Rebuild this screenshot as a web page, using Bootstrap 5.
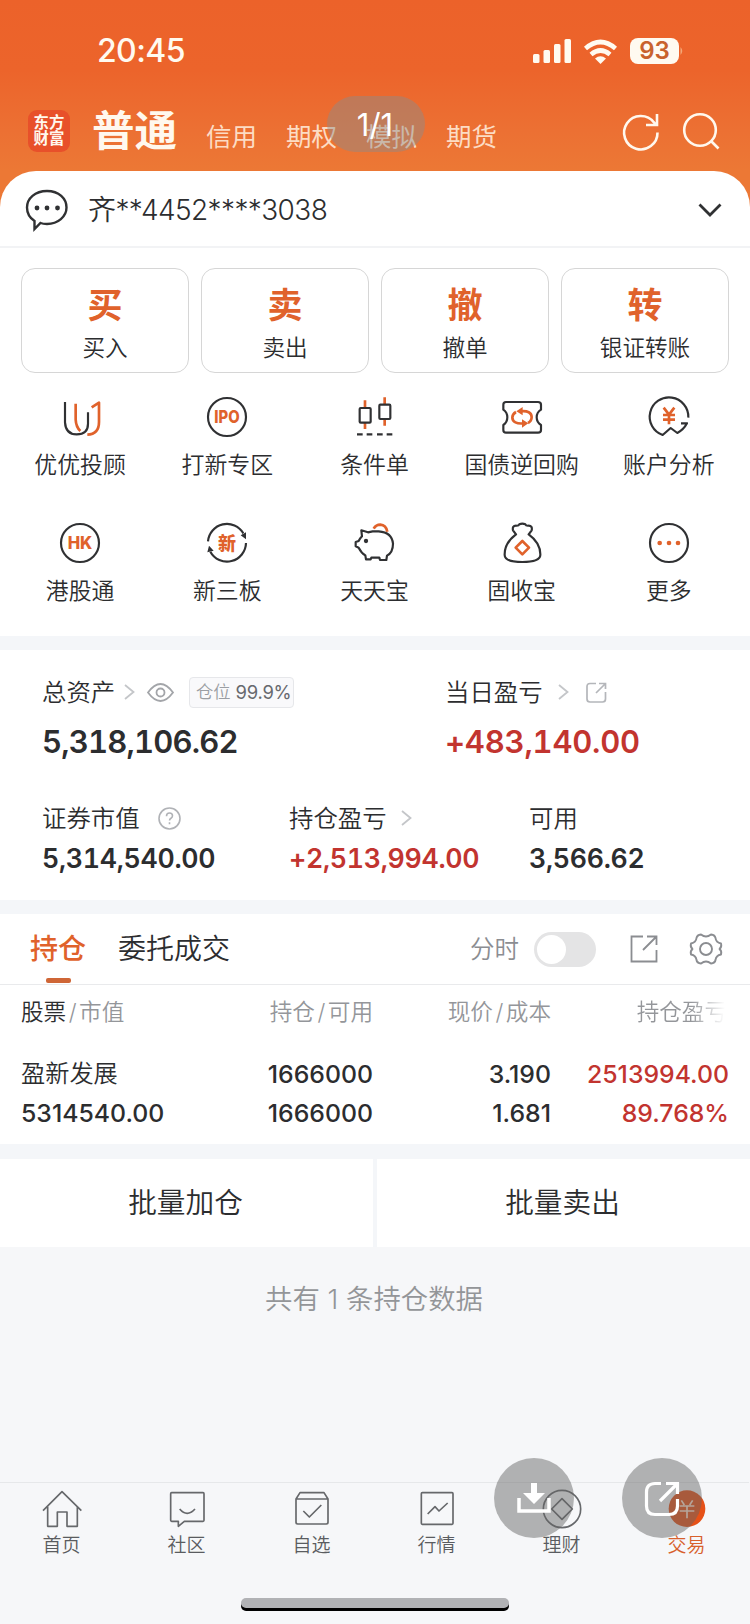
<!DOCTYPE html>
<html lang="zh-CN">
<head>
<meta charset="utf-8">
<meta name="viewport" content="width=device-width, initial-scale=1">
<title>东方财富 交易</title>
<link href="https://cdn.jsdelivr.net/npm/bootstrap@5.3.0/dist/css/bootstrap.min.css" rel="stylesheet">
<style>
:root{--ink:#2c2d2f;--org:#e0622b;--red:#c2342f;--gap:#f4f6f9}
body{font-family:Inter,"Noto Sans CJK SC",sans-serif;font-weight:350;color:var(--ink);background:#f6f7f9;line-height:1;overflow:hidden}
.phone{width:750px;height:1624px;position:relative}
svg{display:block;flex:none;overflow:visible}
.hero{height:210px;background:linear-gradient(#ec622a 0,#ec642b 70px,#ec7033 130px,#ec7835 171px)}
.statusbar{height:100px;padding:2px 66px 0 97px;color:#fffaf0}
.clock{font-size:32px;font-weight:500;letter-spacing:-.6px}
.battery{width:49px;height:26px;border-radius:8px;background:#fffaf0;color:#c9622c;font-size:24px;font-weight:600}
.topnav{height:71px;padding:0 30px 9px 28px;color:#fff8ee}
.logo{width:42px;height:42px;border-radius:9px;background:#e8502a;font-size:15.4px;line-height:16.5px;font-weight:700}
.tab-main{font-size:42.5px;font-weight:700;margin-left:22px;width:84px;white-space:nowrap}
.tab-sub{font-size:25.5px;font-weight:400;color:#fcdcc4;margin-left:30px;padding-top:12px;width:50px;white-space:nowrap}
.pager{position:absolute;left:327px;top:96px;width:98px;height:56px;border-radius:28px;background:rgba(140,140,140,.45);color:#fff;font-size:31px;padding-right:2px;font-weight:400}
.sheet{background:#fff;border-radius:36px 36px 0 0;margin-top:-39px;height:465px}
.account{height:77px;padding:2px 28px 0 25px;border-bottom:2px solid #f2f3f5;font-size:28px;letter-spacing:-.6px}
.trade{padding:20px 21px 0;gap:12px}
.tcard{flex:1 1 0;height:105px;border:1px solid #d6d6d6;border-radius:14px;padding-top:18px}
.tcard b{font-size:35px;line-height:36px;color:var(--org);font-weight:700}
.tcard span{font-size:22.6px;line-height:24px;margin-top:13px}
.feature{padding:0 7.5px 0 6.5px}
.feature>div{width:20%}
.feature span{font-size:22.9px;line-height:24px;margin-top:16px}
.band{height:14px;background:var(--gap)}
.assets{height:250px;background:#fff;padding:28px 0 0 42px}
.lab{font-size:24.4px;line-height:28px;height:28px}
.big{font-size:31px;line-height:34px;font-weight:600;margin-top:19px;font-variant-numeric:tabular-nums;letter-spacing:-.8px}
.big.up{letter-spacing:-.2px}
.mid{font-size:26.7px;line-height:30px;font-weight:600;margin-top:11px;font-variant-numeric:tabular-nums;letter-spacing:-.3px}
.up{color:var(--red)}
.chip{width:105px;height:31px;border:1px solid #e6e7ea;background:#f9f9fb;border-radius:4px;font-size:17.3px;color:#9b9ea3;white-space:nowrap;gap:5px;padding-left:4px}
.chip i{font-style:normal;font-size:18.4px;color:#67696e;letter-spacing:-.2px;font-weight:400}
.tabs2{height:71px;background:#fff;border-bottom:1px solid #e9eaec;padding:0 28px 0 30px;font-size:28px}
.on{color:var(--org);font-weight:500;position:relative}
.on:after{content:"";position:absolute;left:16px;top:43px;width:25px;height:5px;border-radius:2px;background:#cf6636}
.toggle{width:62px;height:35px;border-radius:18px;background:#e4e4e5;padding:3px}
.toggle:before{content:"";display:block;width:29px;height:29px;border-radius:50%;background:#fff}
.holdings{height:159px;background:#fff;padding:13px 21px 0;font-size:22.6px}
.hrow{display:grid;grid-template-columns:200px 152px 178px 178px;line-height:28px}
.hrow>*{text-align:right;white-space:nowrap}
.hrow>:first-child{text-align:left}
.hhead{color:#94969a}
.hhead i{font-style:normal;margin:0 2.5px}
.num{font-size:24.8px;font-weight:500;line-height:30px}
.fade-r{padding-right:2px;background:linear-gradient(90deg,#94969a 140px,#fff 174px);-webkit-background-clip:text;background-clip:text;color:transparent}
.bulk{height:88px;gap:4px;background:var(--gap);font-size:28.7px}
.bulk>div{background:#fff;padding-right:2px}
.total{height:235px;padding:38px 2px 0 0;font-size:27.4px;line-height:28px;color:#939598}
.foot{height:143px;border-top:1px solid #e6e8ea;padding-top:6px;margin-left:-1px;margin-right:1px;font-size:19px;color:#5a5c60}
.foot span{line-height:22px;margin-top:6px}
.fab{position:absolute;top:1458px;width:80px;height:80px;border-radius:50%;background:rgba(100,100,100,.48)}
.homebar{position:absolute;left:241px;top:1598px;width:268px;height:10px;border-radius:5px;background:#b1b2b5;box-shadow:0 3px 0 #000}
.d{fill:none;stroke:#303133;stroke-width:6.5;stroke-linejoin:round}
.o{fill:none;stroke:#e0622b;stroke-width:8;stroke-linejoin:round}
.of{fill:#e0622b}
.n{fill:none;stroke:#66686b;stroke-width:5;stroke-linejoin:round}
.tx{fill:#e0622b;font-weight:800;text-anchor:middle}
</style>
</head>
<body>
<div class="phone">
  <header class="hero">
    <div class="statusbar d-flex align-items-center">
      <span class="clock me-auto">20:45</span>
      <svg width="38" height="24" viewBox="0 0 38 24" fill="#fffaf0"><rect y="15" width="6.5" height="9" rx="1.5"/><rect x="10.5" y="11" width="6.5" height="13" rx="1.5"/><rect x="21" y="5" width="6.5" height="19" rx="1.5"/><rect x="31.500" width="6.500" height="24" rx="1.500"/></svg>
      <svg style="margin:0 13px 0 13px" width="33" height="25" viewBox="0 0 33 25" fill="none" stroke="#fffaf0" stroke-width="4.600"><path d="M1.500 9.500Q16.500-3.500 31.500 9.500"/><path d="M7 15.500Q16.500 7.500 26 15.500"/><path d="M11 19.500Q16.500 15 22 19.500L16.500 25Z" fill="#fffaf0" stroke="none"/></svg>
      <div class="battery d-flex align-items-center justify-content-center">93</div>
      <svg width="5" height="10" viewBox="0 0 5 10"><path d="M1.500 1Q5 5 1.500 9Z" fill="#f3a878"/></svg>
    </div>
    <div class="topnav d-flex align-items-center">
      <div class="logo d-flex flex-column align-items-center justify-content-center"><span>东方</span><span>财富</span></div>
      <span class="tab-main">普通</span>
      <span class="tab-sub">信用</span><span class="tab-sub">期权</span><span class="tab-sub">模拟</span><span class="tab-sub">期货</span>
      <svg class="ms-auto" width="36" height="37" viewBox="0 0 36 37" fill="none" stroke="#fff8ee" stroke-width="2.600"><path d="M34.500 19.500A16.700 16.700 0 1 1 31 9.500L34 12"/><path d="M34 1V12H23"/></svg>
      <svg style="margin-left:24px" width="37" height="37" viewBox="0 0 37 37" fill="none" stroke="#fff8ee" stroke-width="2.600"><circle cx="17" cy="17" r="15.800"/><path d="M28 28L35.500 35.500"/></svg>
    </div>
  </header>

  <section class="sheet">
    <div class="account d-flex align-items-center">
      <svg width="43" height="42" viewBox="0 0 43 42"><path d="M22 2C34 2 41.500 9.500 41.500 18.500S33 35 22 35C19.500 35 17.500 34.800 15.500 34L9.500 40V32C5 29 2 24.500 2 18.500C2 9.500 10 2 22 2Z" fill="none" stroke="#303133" stroke-width="2.400"/><g fill="#303133"><circle cx="12" cy="19" r="2.400"/><circle cx="22" cy="19" r="2.400"/><circle cx="32.500" cy="19" r="2.400"/></g></svg>
      <span class="ms-3 me-auto ps-1">齐**4452****3038</span>
      <svg width="24" height="14" viewBox="0 0 24 14"><path d="M1.500 1.500L12 12L22.500 1.500" fill="none" stroke="#303133" stroke-width="2.800"/></svg>
    </div>
    <div class="trade d-flex">
      <div class="tcard d-flex flex-column align-items-center"><b>买</b><span>买入</span></div>
      <div class="tcard d-flex flex-column align-items-center"><b>卖</b><span>卖出</span></div>
      <div class="tcard d-flex flex-column align-items-center"><b>撤</b><span>撤单</span></div>
      <div class="tcard d-flex flex-column align-items-center"><b>转</b><span>银证转账</span></div>
    </div>
    <div class="feature d-flex" style="margin-top:24px">
      <div class="d-flex flex-column align-items-center"><svg width="40" height="40" viewBox="0 0 120 120"><path class="d" d="M15 15V76Q17 112 50 112Q84 112 84 80V46"/><path class="o" d="M47 20V68Q48 90 61 102"/><path class="o" d="M95 31L117 17V75Q117 112 82 113"/></svg><span>优优投顾</span></div>
      <div class="d-flex flex-column align-items-center"><svg width="40" height="40" viewBox="0 0 120 120"><circle class="d" cx="60" cy="60" r="57"/><text class="tx" x="60" y="78" font-size="51" textLength="76" lengthAdjust="spacingAndGlyphs">IPO</text></svg><span>打新专区</span></div>
      <div class="d-flex flex-column align-items-center"><svg width="40" height="40" viewBox="0 0 120 120"><path class="o" d="M33 10V33M33 77V96M92 1V23M92 66V86"/><rect class="d" x="17" y="33" width="33" height="44" rx="3"/><rect class="d" x="76" y="23" width="33" height="43" rx="3"/><path class="d" d="M9 112H26M38 112H55M69 112H86M98 112H115"/></svg><span>条件单</span></div>
      <div class="d-flex flex-column align-items-center"><svg width="40" height="40" viewBox="0 0 120 120"><path class="d" d="M12 15H108Q117 15 117 23V38Q104 46 104 61Q104 76 117 84V99Q117 107 108 107H12Q4 107 4 99V84Q16 76 16 61Q16 46 4 38V23Q4 15 12 15Z"/><path class="o" d="M56 43Q88 40 89 60Q89 72 78 78M66 79Q32 82 31 62Q31 51 42 45"/><path class="of" d="M43 43L62 30V55ZM79 79L60 67V92Z"/></svg><span>国债逆回购</span></div>
      <div class="d-flex flex-column align-items-center"><svg width="40" height="40" viewBox="0 0 120 120"><path class="d" d="M118 62A58 58 0 1 0 41 114L65 93L85 108Q104 98 114 79H96"/><path class="o" d="M44 32L60 53L76 32M60 53V82M42 54H78M42 68H78"/></svg><span>账户分析</span></div>
    </div>
    <div class="feature d-flex" style="margin-top:46px">
      <div class="d-flex flex-column align-items-center"><svg width="40" height="40" viewBox="0 0 120 120"><circle class="d" cx="60" cy="60" r="57"/><text class="tx" x="60" y="78" font-size="50" textLength="74" lengthAdjust="spacingAndGlyphs">HK</text></svg><span>港股通</span></div>
      <div class="d-flex flex-column align-items-center"><svg width="40" height="40" viewBox="0 0 120 120"><path class="d" d="M3 55A57 57 0 0 1 109 31M117 60A57 57 0 0 1 10 86"/><path fill="#303133" d="M101 37L117 28V49ZM1 88L6 68L20 83Z"/><text class="tx" x="60" y="80" font-size="54">新</text></svg><span>新三板</span></div>
      <div class="d-flex flex-column align-items-center"><svg width="40" height="40" viewBox="0 0 120 120"><path class="d" d="M42 28L22 22L24 40Q18 46 14 54L5 57V70L14 74Q22 90 34 97L36 109H50L52 104H76L78 111H97L99 98Q117 88 117 62Q114 28 74 25H56Z"/><circle cx="36" cy="54" r="6.500" fill="#303133"/><path class="o" d="M59 17Q66 5 79 5Q96 6 100 26"/></svg><span>天天宝</span></div>
      <div class="d-flex flex-column align-items-center"><svg width="40" height="40" viewBox="0 0 120 120"><path class="d" d="M42 34L33 22Q30 8 42 8Q50 9 52 4Q61 0 70 4Q72 9 80 8Q92 8 89 22L80 34Q116 60 115 96Q114 117 61 117Q8 117 8 96Q7 60 42 34Z"/><path class="o" d="M61 54L81 74L61 94L41 74Z"/></svg><span>固收宝</span></div>
      <div class="d-flex flex-column align-items-center"><svg width="40" height="40" viewBox="0 0 120 120"><circle class="d" cx="60" cy="60" r="57"/><g class="of"><circle cx="32" cy="60" r="7"/><circle cx="60" cy="60" r="7"/><circle cx="87" cy="60" r="7"/></g></svg><span>更多</span></div>
    </div>
  </section>
  <div class="band"></div>

  <section class="assets">
    <div class="d-flex">
      <div style="width:403px">
        <div class="lab d-flex align-items-center">总资产
          <svg style="margin-left:9px" width="11" height="16" viewBox="0 0 11 16"><path d="M1 1L9.500 8L1 15" fill="none" stroke="#c4c6c9" stroke-width="1.800"/></svg>
          <svg style="margin:0 15px 0 12px" width="27" height="19" viewBox="0 0 27 19" fill="none" stroke="#a3a5a9" stroke-width="1.800"><path d="M1 9.500Q13.500-7.500 26 9.500Q13.500 26.500 1 9.500Z"/><circle cx="13.500" cy="9.500" r="4"/></svg>
          <span class="chip d-flex align-items-center justify-content-center">仓位<i>99.9%</i></span>
        </div>
        <div class="big">5,318,106.62</div>
      </div>
      <div>
        <div class="lab d-flex align-items-center">当日盈亏
          <svg style="margin-left:15px" width="11" height="16" viewBox="0 0 11 16"><path d="M1 1L9.500 8L1 15" fill="none" stroke="#c4c6c9" stroke-width="1.800"/></svg>
          <svg style="margin-left:17px" width="21" height="21" viewBox="0 0 21 21" fill="none" stroke="#b4b6ba" stroke-width="1.700"><path d="M10 1.500H4Q1 1.500 1 4.500V17Q1 20 4 20H16.500Q19.500 20 19.500 17V10M13 1.500H19.500V7M19 2L10 11"/></svg>
        </div>
        <div class="big up">+483,140.00</div>
      </div>
    </div>
    <div class="d-flex" style="margin-top:45px">
      <div style="width:247px">
        <div class="lab d-flex align-items-center">证券市值
          <svg style="margin-left:18px" width="23" height="23" viewBox="0 0 23 23" fill="none" stroke="#b0b2b6" stroke-width="1.600"><circle cx="11.500" cy="11.500" r="10.500"/><path d="M8.500 9.200Q8.500 6 11.500 6T14.500 8.800Q14.500 10.300 13 11.200T11.500 13.500M11.500 15.200V17.200"/></svg>
        </div>
        <div class="mid">5,314,540.00</div>
      </div>
      <div style="width:240px">
        <div class="lab d-flex align-items-center">持仓盈亏
          <svg style="margin-left:14px" width="11" height="16" viewBox="0 0 11 16"><path d="M1 1L9.500 8L1 15" fill="none" stroke="#c4c6c9" stroke-width="1.800"/></svg>
        </div>
        <div class="mid up">+2,513,994.00</div>
      </div>
      <div>
        <div class="lab">可用</div>
        <div class="mid">3,566.62</div>
      </div>
    </div>
  </section>
  <div class="band"></div>

  <section class="tabs2 d-flex align-items-center">
    <span class="on">持仓</span>
    <span class="me-auto" style="margin-left:32px">委托成交</span>
    <span style="font-size:24.500px;color:#8b8d91">分时</span>
    <span class="toggle" style="margin:0 34px 0 15px"></span>
    <svg width="28" height="28" viewBox="0 0 28 28" fill="none" stroke="#8b8d91" stroke-width="1.800"><path d="M13 1.500H1.500V26.500H26.500V15M17 1.500H26.500V10M26 2L13 15"/></svg>
    <svg style="margin-left:32px" width="32" height="32" viewBox="0 0 32 32" fill="none" stroke="#8b8d91" stroke-width="1.900" stroke-linejoin="round"><circle cx="16" cy="16" r="6"/><path d="M11 1.500Q16 5.500 21 1.500Q25 2 25.500 5Q26 9.500 31 10.500Q32 14 29.500 16Q32 18 31 21.500Q26 22.500 25.500 27Q25 30 21 30.500Q16 26.500 11 30.500Q7 30 6.500 27Q6 22.500 1 21.500Q0 18 2.500 16Q0 14 1 10.500Q6 9.500 6.500 5Q7 2 11 1.500Z"/></svg>
  </section>

  <section class="holdings">
    <div class="hrow hhead"><span><span style="color:#2c2d2f">股票</span><i>/</i>市值</span><span>持仓<i>/</i>可用</span><span>现价<i>/</i>成本</span><span class="fade-r">持仓盈亏</span></div>
    <div class="hrow" style="margin-top:33px;line-height:30px"><span style="font-size:24.200px">盈新发展</span><span class="num">1666000</span><span class="num">3.190</span><span class="num up">2513994.00</span></div>
    <div class="hrow" style="margin-top:9px"><span class="num">5314540.00</span><span class="num">1666000</span><span class="num">1.681</span><span class="num up">89.768%</span></div>
  </section>
  <div class="band" style="height:15px"></div>
  <section class="bulk d-flex">
    <div class="d-flex align-items-center justify-content-center" style="width:373px">批量加仓</div>
    <div class="d-flex align-items-center justify-content-center flex-fill">批量卖出</div>
  </section>
  <div class="total text-center">共有 1 条持仓数据</div>

  <nav class="foot d-flex">
    <div class="col-2 d-flex flex-column align-items-center"><svg width="40" height="40" viewBox="0 0 120 120"><path class="n" d="M3 65L60 8L118 65M17 53V112H46V69H75V112H106V53"/></svg><span>首页</span></div>
    <div class="col-2 d-flex flex-column align-items-center"><svg width="40" height="40" viewBox="0 0 120 120"><path class="n" d="M14 11H108Q111 11 111 14V94Q111 97 108 97H52L34 112V97H14Q11 97 11 94V14Q11 11 14 11ZM38 60Q60 86 84 60"/></svg><span>社区</span></div>
    <div class="col-2 d-flex flex-column align-items-center"><svg width="40" height="40" viewBox="0 0 120 120"><path class="n" d="M12 30L24 11H96L108 30V100Q108 105 103 105H17Q12 105 12 100ZM12 30H108M34 66L52 84L88 48"/></svg><span>自选</span></div>
    <div class="col-2 d-flex flex-column align-items-center"><svg width="40" height="40" viewBox="0 0 120 120"><rect class="n" x="13" y="11" width="95" height="95" rx="3"/><path class="n" d="M32 75L54 53L66 66L92 42"/></svg><span>行情</span></div>
    <div class="col-2 d-flex flex-column align-items-center"><svg width="40" height="40" viewBox="0 0 120 120"><circle class="n" cx="60" cy="60" r="56"/><path class="n" d="M60 29L91 60L60 91L29 60Z"/></svg><span>理财</span></div>
    <div class="col-2 d-flex flex-column align-items-center" style="color:#d8602c"><svg width="40" height="40" viewBox="0 0 120 120"><circle cx="60" cy="59" r="55" fill="#e65118"/><path d="M43 34L52 48M77 34L68 48M38 51H82M38 66H82M60 51V88" fill="none" stroke="#ffe0cc" stroke-width="5"/></svg><span>交易</span></div>
  </nav>

  <div class="pager d-flex align-items-center justify-content-center">1/1</div>
  <div class="fab" style="left:494px"><svg width="80" height="80" viewBox="0 0 80 80"><path d="M37 25H43V35H51L40 46L29 35H37Z" fill="#fff"/><path d="M25 40V53H55V40" fill="none" stroke="#fff" stroke-width="3.500"/></svg></div>
  <div class="fab" style="left:622px"><svg width="80" height="80" viewBox="0 0 80 80" fill="none" stroke="#fff" stroke-width="3.200"><path d="M39 25.500H33Q24.500 25.500 24.500 34V48Q24.500 56.500 33 56.500H47Q55.500 56.500 55.500 48V41M44 25.500H55.500V36M55 26L38 43"/></svg></div>
  <div class="homebar"></div>
</div>
<script src="https://cdn.jsdelivr.net/npm/bootstrap@5.3.0/dist/js/bootstrap.bundle.min.js"></script>
</body>
</html>
